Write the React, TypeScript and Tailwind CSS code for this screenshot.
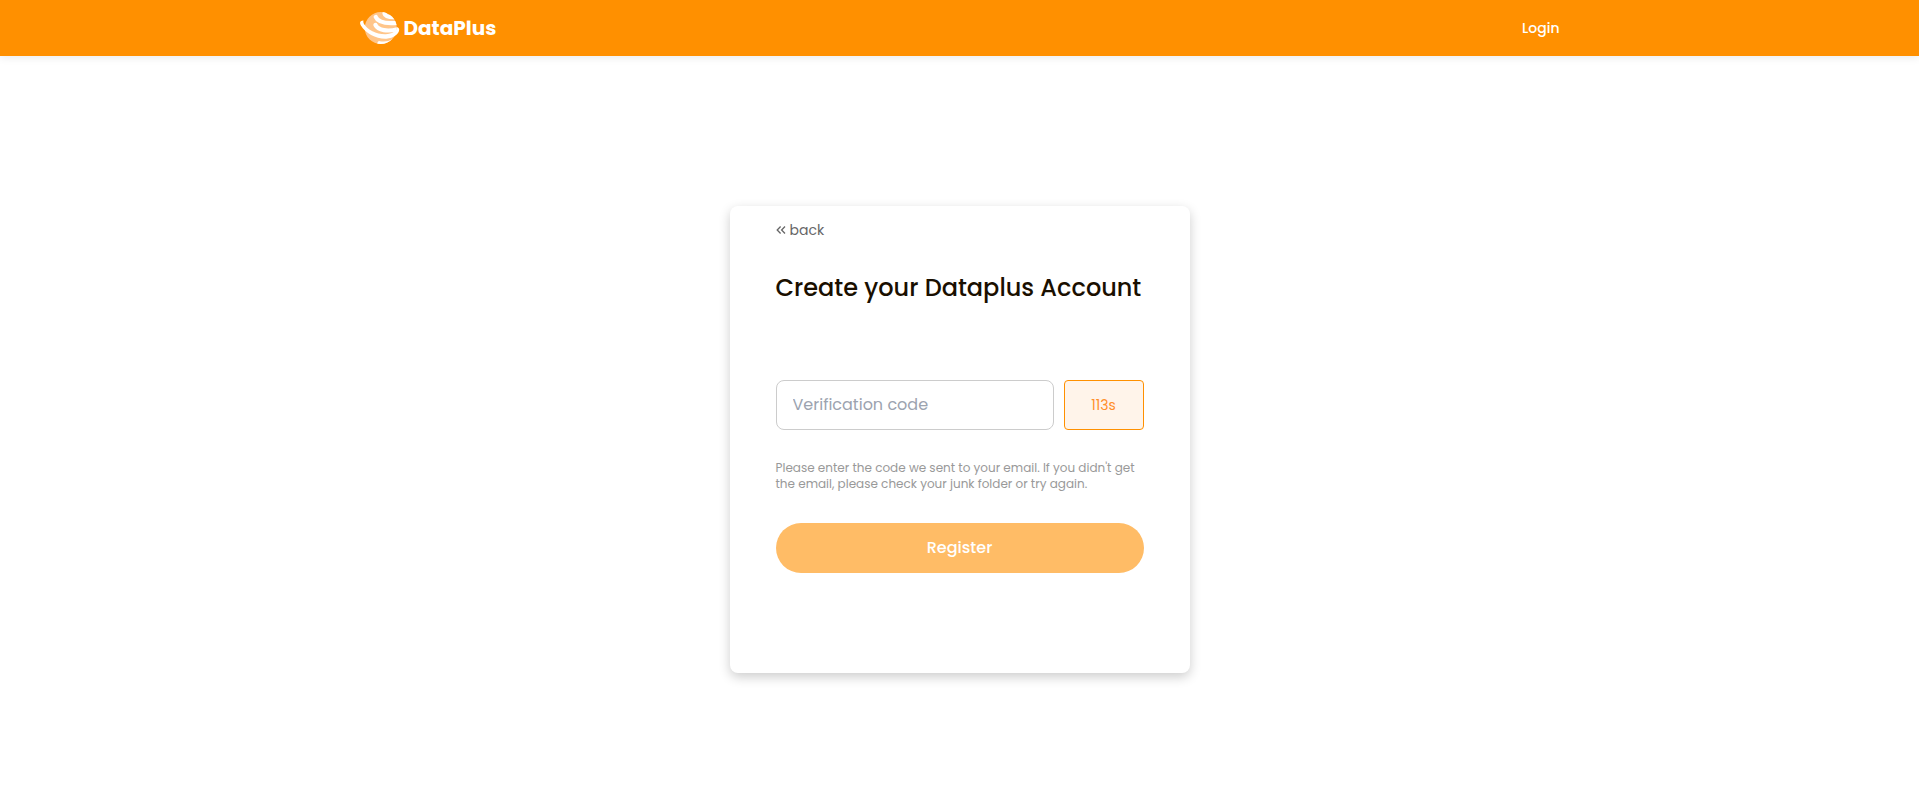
import React, { useState } from 'react';

const Logo = () => (
  <svg className="h-[34px] w-10" viewBox="0 0 40 34" fill="none" aria-hidden="true">
    <defs>
      <clipPath id="globe">
        <circle cx="20.8" cy="17" r="16" />
      </clipPath>
    </defs>
    <circle cx="20.8" cy="17" r="16" fill="#ffc589" />
    <g clipPath="url(#globe)" stroke="#fff" strokeLinecap="round" strokeWidth="4.2">
      <path d="M24.5 2.5 C25 5 29 6.5 36 6.2" />
      <path d="M15.8 6 C17.5 10.5 25 13.2 40 11.5" />
      <path d="M15.5 14 C18 19 27 21.5 40 17.5" />
      <path d="M19.5 32.2 C24 33 29 32.5 33 30.5" />
    </g>
    <path
      d="M3.5 9.5 C-0.2 9.8 -0.6 12 0.9 14.5 C5.5 22.5 16.5 28.2 26.5 27.7 C33.5 27.2 39.2 23 39.2 18.5 C39.2 17.3 38.2 16.4 37 16 C37.2 20 32 23 25.5 23.2 C16.5 23.4 7.5 18.6 4 13 C3.2 11.7 3.2 10.5 3.5 9.5 Z"
      fill="#fff"
    />
  </svg>
);

const BackIcon = () => (
  <svg className="h-2 w-[10px]" viewBox="0 0 10 8" fill="none" stroke="currentColor" strokeWidth="1.3" aria-hidden="true">
    <path d="M4.6 0.5 L1.2 4 L4.6 7.5" />
    <path d="M9 0.5 L5.6 4 L9 7.5" />
  </svg>
);

const App = () => {
  const [code, setCode] = useState('');
  const secondsLeft = 113;

  return (
    <div className="flex min-h-screen flex-col bg-white font-[Poppins,Inter,sans-serif]">
      {/* Header */}
      <header className="bg-[#ff9000] text-white shadow-[0_2px_8px_rgba(0,0,0,0.08)]">
        <div className="mx-auto flex h-14 max-w-[1200px] items-center justify-between">
          <a href="#" className="flex items-center gap-1">
            <Logo />
            <span className="text-xl font-bold">DataPlus</span>
          </a>
          <a href="#login" className="text-sm font-medium">Login</a>
        </div>
      </header>

      {/* Register card */}
      <main className="flex flex-1 items-center justify-center pt-4">
        <form
          className="w-full max-w-[460px] rounded-lg bg-white px-[46px] pt-[14px] pb-[100px] shadow-[0_4px_12px_rgba(0,0,0,0.2)]"
          onSubmit={(e) => e.preventDefault()}
        >
          <a href="#back" className="flex items-center gap-1 text-sm leading-5 text-[#666]">
            <BackIcon />
            back
          </a>

          <h1 className="mt-[30px] text-2xl leading-9 font-medium whitespace-nowrap text-[#1a0f00]">
            Create your Dataplus Account
          </h1>

          <div className="mt-[74px] flex gap-[10px]">
            <input
              type="text"
              aria-label="Verification code"
              placeholder="Verification code"
              value={code}
              onChange={(e) => setCode(e.target.value)}
              className="h-[50px] min-w-0 flex-1 rounded-lg border border-[#ccc] px-4 text-base outline-none placeholder:text-[#9ca3af]"
            />
            <button
              type="button"
              className="h-[50px] w-20 rounded border border-[#ff9000] bg-[#fff4ea] text-sm text-[#ff8f2b]"
            >
              {secondsLeft}s
            </button>
          </div>

          <p className="mt-[30px] text-xs leading-4 text-[#999]">
            Please enter the code we sent to your email. If you didn't get the email, please check your junk folder or try again.
          </p>

          <button
            type="submit"
            className="mt-[31px] h-[50px] w-full rounded-full bg-[#ffbc66] text-base font-medium text-white"
          >
            Register
          </button>
        </form>
      </main>
    </div>
  );
};

export default App;
